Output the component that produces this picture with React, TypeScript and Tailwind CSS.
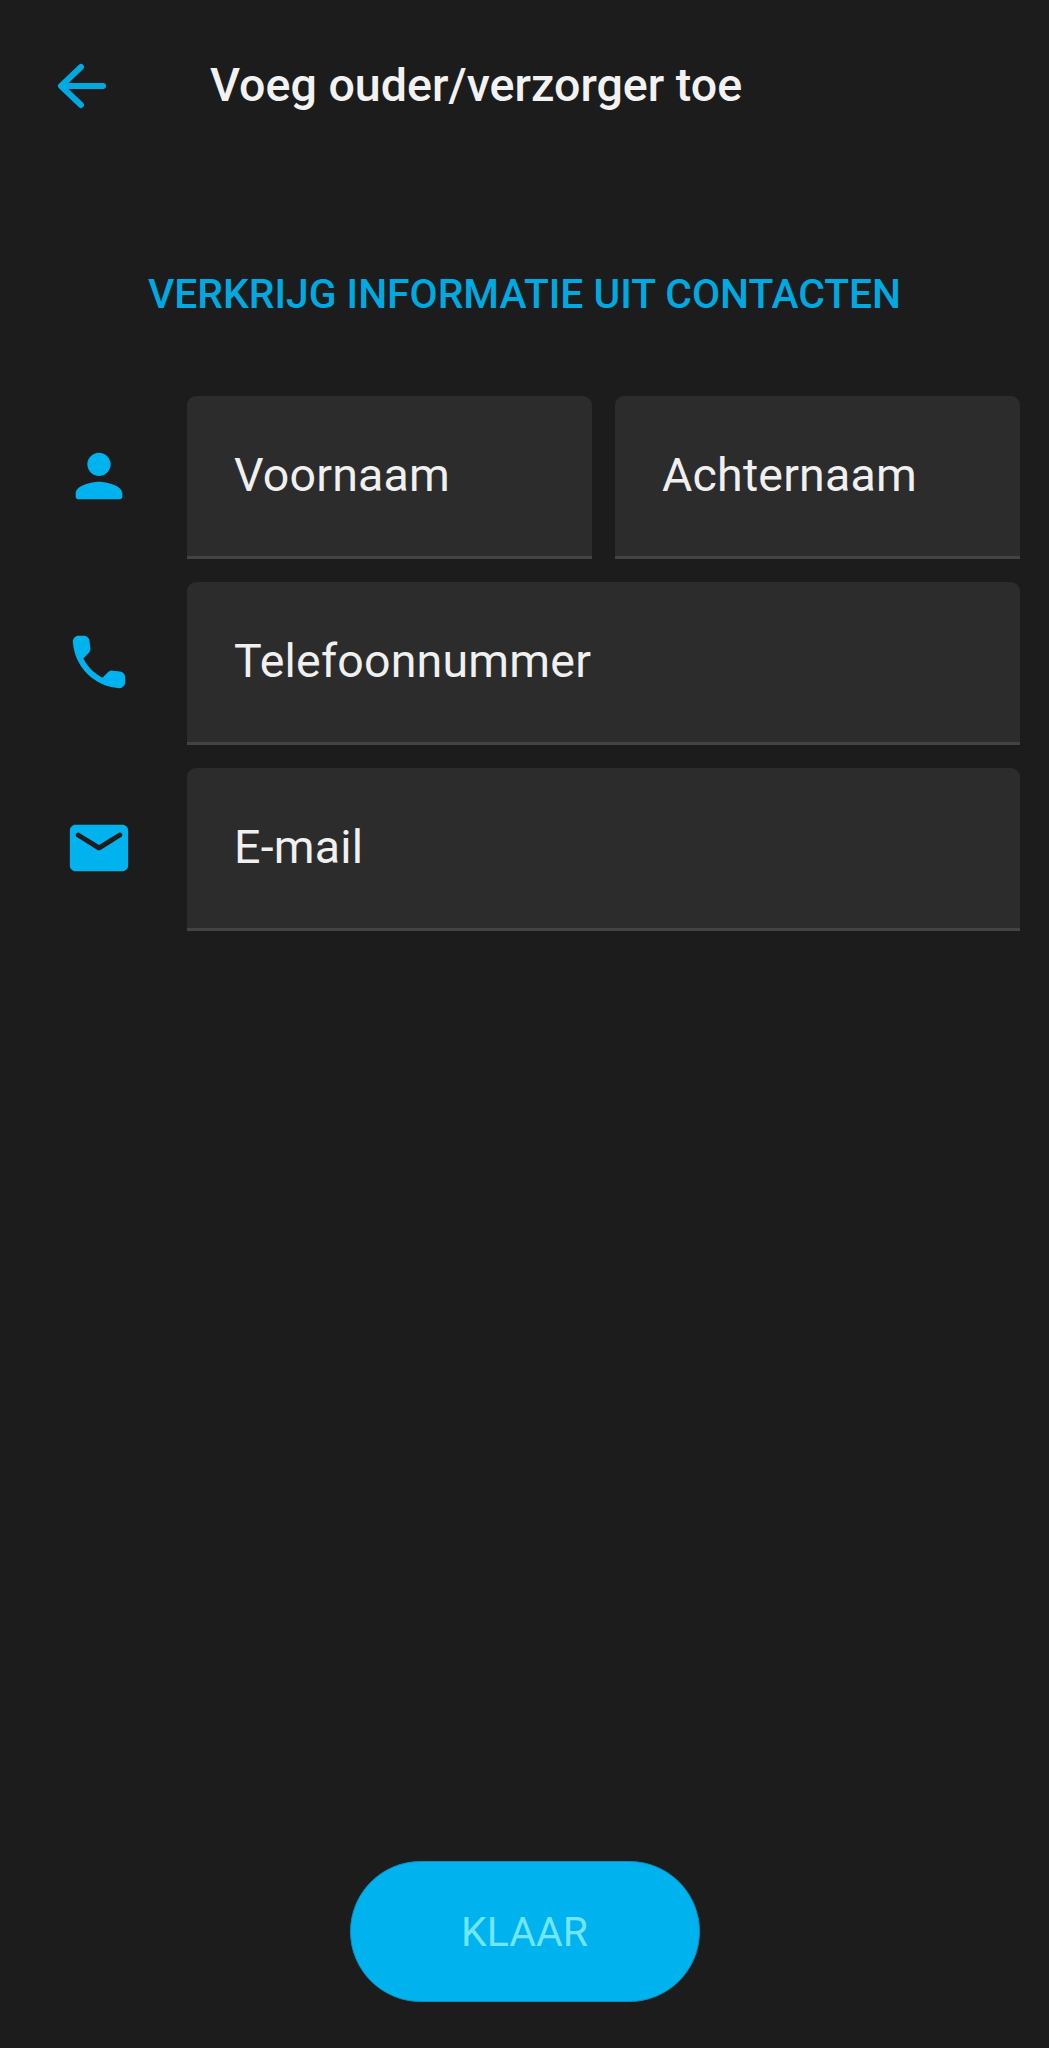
import React from 'react';

const font = { fontFamily: 'Roboto, sans-serif' };

function Field({ label, className = '' }: { label: string; className?: string }) {
  return (
    <div
      className={`flex h-[163px] items-center rounded-t-[9px] border-b-[3px] border-[#434343] bg-[#2c2c2c] pl-[47px] text-[46.5px] tracking-[0.2px] text-[#f0f0f0] ${className}`}
    >
      {label}
    </div>
  );
}

function Icon({ d }: { d: string }) {
  return (
    <div className="flex w-[187px] shrink-0 items-center justify-center pb-[4px] pl-[11px]">
      <svg viewBox="0 0 24 24" className="h-[70px] w-[70px] fill-[#00b2ee]">
        <path d={d} />
      </svg>
    </div>
  );
}

const person =
  'M12 12c2.21 0 4-1.79 4-4s-1.79-4-4-4-4 1.79-4 4 1.79 4 4 4zm0 2c-2.67 0-8 1.34-8 4v1c0 .55.45 1 1 1h14c.55 0 1-.45 1-1v-1c0-2.66-5.33-4-8-4z';
const phone =
  'M19.23 15.26l-2.54-.29c-.61-.07-1.21.14-1.64.57l-1.84 1.84c-2.83-1.44-5.15-3.75-6.59-6.59l1.85-1.85c.43-.43.64-1.03.57-1.64l-.29-2.52c-.12-1.01-.97-1.77-1.99-1.77H5.03c-1.13 0-2.07.94-2 2.07.53 8.54 7.36 15.36 15.89 15.89 1.13.07 2.07-.87 2.07-2v-1.73c.01-1.01-.75-1.86-1.76-1.98z';
const mail =
  'M20 4H4c-1.1 0-1.99.9-1.99 2L2 18c0 1.1.9 2 2 2h16c1.1 0 2-.9 2-2V6c0-1.1-.9-2-2-2zm-.4 4.25l-7.07 4.42c-.32.2-.74.2-1.06 0L4.4 8.25c-.25-.16-.4-.43-.4-.7 0-.67.73-1.07 1.3-.72L12 11l6.7-4.17c.57-.35 1.3.05 1.3.72 0 .27-.15.54-.4.7z';

export default function App() {
  return (
    <div style={font} className="flex h-[2048px] w-full flex-col overflow-hidden bg-[#1c1c1c]">
      <header className="flex h-[171px] shrink-0 items-center pl-[57px]">
        <svg viewBox="0 0 49 46" className="h-[46px] w-[49px] fill-none stroke-[#00a9e0] stroke-[6px]">
          <path d="M46 23H5M24 4 4 23 24 42" strokeLinecap="round" strokeLinejoin="round" />
        </svg>
        <h1 className="ml-[104px] text-[46.6px] font-medium text-[#f2f2f2]">Voeg ouder/verzorger toe</h1>
      </header>

      <div className="mt-[93px] text-center text-[40.8px] leading-[60px] font-medium text-[#00a9e0]">
        VERKRIJG INFORMATIE UIT CONTACTEN
      </div>

      <div className="mt-[72px] flex flex-col gap-[23px] pr-[29px]">
        <div className="flex">
          <Icon d={person} />
          <div className="flex flex-1 gap-[23px]">
            <Field label="Voornaam" className="flex-1" />
            <Field label="Achternaam" className="flex-1" />
          </div>
        </div>
        <div className="flex">
          <Icon d={phone} />
          <Field label="Telefoonnummer" className="flex-1" />
        </div>
        <div className="flex">
          <Icon d={mail} />
          <Field label="E-mail" className="flex-1" />
        </div>
      </div>

      <div className="mt-auto mb-[46px] flex justify-center">
        <button className="h-[141px] w-[350px] rounded-full border-[1px] border-[#0a8fbe] bg-[#00b2ee] pt-[2px] text-[41px] text-[#70e6f9]">
          KLAAR
        </button>
      </div>
    </div>
  );
}
